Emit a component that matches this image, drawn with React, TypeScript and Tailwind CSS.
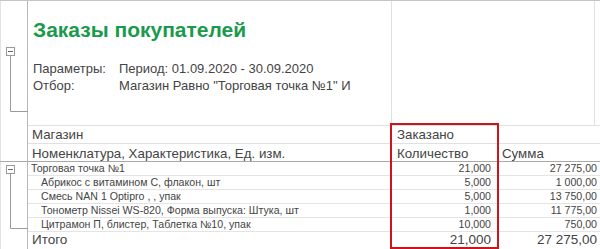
import React from "react";

const F = "font-['Liberation_Sans',Arial,sans-serif]";

function Bracket({ h, boxY, endY }: { h: number; boxY: number; endY: number }) {
  return (
    <svg width="27" height={h} className="block">
      <rect x="5.5" y={boxY + 0.5} width="8" height="8" fill="white" stroke="#9a9a9a" strokeWidth="1" />
      <line x1="7" y1={boxY + 4.5} x2="12" y2={boxY + 4.5} stroke="#6a6a6a" strokeWidth="1" />
      <line x1="9.5" y1={boxY + 8.5} x2="9.5" y2={endY + 0.5} stroke="#9a9a9a" strokeWidth="1" />
      <line x1="9.5" y1={endY + 0.5} x2="27" y2={endY + 0.5} stroke="#9a9a9a" strokeWidth="1" />
    </svg>
  );
}

const rows = [
  { name: "Торговая точка №1", qty: "21,000", sum: "27 275,00", indent: false },
  { name: "Абрикос с витамином С, флакон, шт", qty: "5,000", sum: "1 000,00", indent: true },
  { name: "Смесь NAN 1 Optipro  , , упак", qty: "5,000", sum: "13 750,00", indent: true },
  { name: "Тонометр Nissei WS-820, Форма выпуска: Штука, шт", qty: "1,000", sum: "11 775,00", indent: true },
  { name: "Цитрамон П, блистер, Таблетка №10, упак", qty: "10,000", sum: "750,00", indent: true },
];

export default function App() {
  return (
    <div className={`${F} relative w-[600px] h-[249px] overflow-hidden bg-white text-[#444]`}>
      {/* Section A: title & params */}
      <div className="flex h-[125px] border-t border-[#c4c4c4]">
        <div className="w-[28px] shrink-0 border-l border-r border-l-[#e2e2e2] border-r-[#b8b8b8]">
          <Bracket h={124} boxY={46} endY={110} />
        </div>
        <div className="w-[363px] shrink-0 pl-[5px] pt-[17px]">
          <div className="text-[21px] leading-[24px] font-bold text-[#1a9a4c]">Заказы покупателей</div>
          <div className="mt-[18px] text-[13px] leading-[17px]">
            <div className="flex">
              <span className="w-[86px]">Параметры:</span>
              <span>Период: 01.09.2020 - 30.09.2020</span>
            </div>
            <div className="flex">
              <span className="w-[86px]">Отбор:</span>
              <span>Магазин Равно "Торговая точка №1" И</span>
            </div>
          </div>
        </div>
        <div className="w-[204px] shrink-0 border-l border-r border-[#e0e0e0]"></div>
      </div>

      {/* Section B: column headers */}
      <div className="flex border-b border-[#a9a9a9]">
        <div className="w-[28px] shrink-0 border-l border-r border-l-[#e2e2e2] border-r-[#b8b8b8]"></div>
        <div className="flex flex-col text-[13.3px] leading-[17px]">
          <div className="grid grid-cols-[363px_106px_103px] h-[18px] border-t border-[#e0e0e0]">
            <div className="pl-[4px]">Магазин</div>
            <div className="pl-[5px] border-l border-[#e0e0e0]">Заказано</div>
            <div className="border-l border-[#e0e0e0]"></div>
          </div>
          <div className="grid grid-cols-[363px_106px_103px] h-[18px] border-t border-[#e0e0e0] pt-[1px]">
            <div className="pl-[4px]">Номенклатура, Характеристика, Ед. изм.</div>
            <div className="pl-[5px] border-l border-[#e0e0e0]">Количество</div>
            <div className="pl-[4px] border-l border-[#e0e0e0]">Сумма</div>
          </div>
        </div>
      </div>

      {/* Section C: data rows */}
      <div className="flex">
        <div className="w-[28px] shrink-0 border-l border-r border-l-[#e2e2e2] border-r-[#b8b8b8]">
          <Bracket h={69} boxY={3} endY={66} />
        </div>
        <div className="flex flex-col text-[10.6px] leading-[13px]">
          {rows.map((r) => (
            <div key={r.name} className="grid grid-cols-[363px_106px_103px] h-[14px] border-b border-[#e4e4e4]">
              <div className={r.indent ? "pl-[13px] whitespace-nowrap" : "pl-[3px] whitespace-nowrap"}>{r.name}</div>
              <div className="pr-[6px] text-right border-l border-[#e4e4e4]">{r.qty}</div>
              <div className="pr-[3px] text-right border-l border-[#e4e4e4]">{r.sum}</div>
            </div>
          ))}
        </div>
      </div>

      {/* Section D: total */}
      <div className="flex h-[17px]">
        <div className="w-[28px] shrink-0 border-l border-r border-l-[#e2e2e2] border-r-[#b8b8b8]"></div>
        <div className="grid grid-cols-[363px_106px_103px] text-[13.5px] leading-[14px] pt-[1px]">
          <div className="pl-[4px]">Итого</div>
          <div className="pr-[6px] text-right">21,000</div>
          <div className="pr-[3px] text-right">27 275,00</div>
        </div>
      </div>

      {/* Highlight frame */}
      <div className="absolute left-[390px] top-[123px] w-[109px] h-[126px] border-2 border-[#d0121b] pointer-events-none"></div>
    </div>
  );
}
